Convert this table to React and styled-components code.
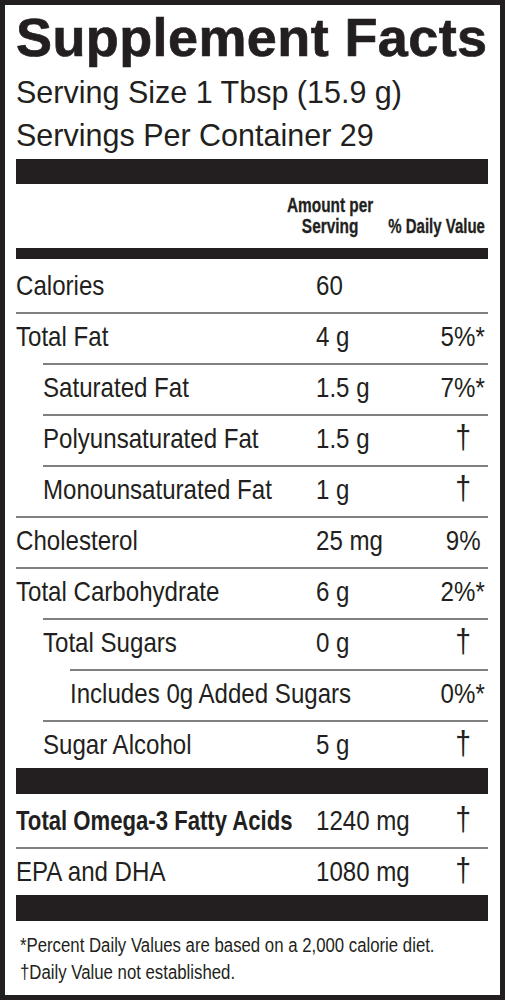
import React from 'react';
import styled, { createGlobalStyle } from 'styled-components';

const INK = '#231f20';

const rows = [
  { name: 'Calories', amount: '60', dv: '', level: 0, first: true },
  { name: 'Total Fat', amount: '4 g', dv: '5%*', level: 0 },
  { name: 'Saturated Fat', amount: '1.5 g', dv: '7%*', level: 1 },
  { name: 'Polyunsaturated Fat', amount: '1.5 g', dv: '†', level: 1 },
  { name: 'Monounsaturated Fat', amount: '1 g', dv: '†', level: 1 },
  { name: 'Cholesterol', amount: '25 mg', dv: '9%', level: 0 },
  { name: 'Total Carbohydrate', amount: '6 g', dv: '2%*', level: 0 },
  { name: 'Total Sugars', amount: '0 g', dv: '†', level: 1 },
  { name: 'Includes 0g Added Sugars', amount: '', dv: '0%*', level: 2 },
  { name: 'Sugar Alcohol', amount: '5 g', dv: '†', level: 1, last: true },
];

const omega = [
  { name: 'Total Omega-3 Fatty Acids', amount: '1240 mg', dv: '†', level: 0, first: true, bold: true },
  { name: 'EPA and DHA', amount: '1080 mg', dv: '†', level: 0, last: true },
];

// the label font is a condensed grotesque; no condensed face is installed,
// so the regular one is squeezed horizontally
const NARROW = 0.86;

export default function App() {
  const renderRows = (list) =>
    list.map((row, index) => (
      <Row key={index} $level={row.level} $first={row.first} $last={row.last}>
        <Name $bold={row.bold}>
          <Squeeze $x={row.bold ? 0.79 : NARROW}>{row.name}</Squeeze>
        </Name>
        <Amount>
          <Squeeze $x={NARROW}>{row.amount}</Squeeze>
        </Amount>
        <Daily $dagger={row.dv === '†'}>
          <Squeeze $x={NARROW} $origin="center">{row.dv}</Squeeze>
        </Daily>
      </Row>
    ));

  return (
    <>
      <GlobalStyle />
      <Label>
        <Title>Supplement Facts</Title>
        <Serving>Serving Size 1 Tbsp (15.9 g)</Serving>
        <Serving>Servings Per Container 29</Serving>
        <Bar $size={25} />
        <Header>
          <AmountHead>
            <Squeeze $x={0.77} $origin="center">
              Amount per
              <br />
              Serving
            </Squeeze>
          </AmountHead>
          <DailyHead>
            <Squeeze $x={0.75} $origin="right">% Daily Value</Squeeze>
          </DailyHead>
        </Header>
        <Bar $size={11} />
        {renderRows(rows)}
        <Bar $size={26} />
        {renderRows(omega)}
        <Bar $size={26} />
        <Notes>
          <Note>
            <Squeeze $x={NARROW}>*Percent Daily Values are based on a 2,000 calorie diet.</Squeeze>
          </Note>
          <Note>
            <Squeeze $x={NARROW}>†Daily Value not established.</Squeeze>
          </Note>
        </Notes>
      </Label>
    </>
  );
}

// Styles

const GlobalStyle = createGlobalStyle`
  body {
    margin: 0;
    background: #fff;
  }
`;

const Label = styled.div`
  box-sizing: border-box;
  width: 505px;
  height: 1000px;
  border: 5px solid ${INK};
  padding: 6px 12px 0 11px;
  color: ${INK};
  font-family: "Liberation Sans", Arial, sans-serif;
  display: flex;
  flex-direction: column;
  overflow: hidden;
`;

const Squeeze = styled.span`
  display: inline-block;
  white-space: nowrap;
  text-align: center;
  transform: scaleX(${(p) => p.$x});
  transform-origin: ${(p) => p.$origin || 'left'} center;
`;

const Title = styled.h1`
  margin: 0;
  font-size: 54px;
  font-weight: 700;
  line-height: 52px;
  letter-spacing: 0.4px;
  -webkit-text-stroke: 0.7px ${INK};
  white-space: nowrap;
`;

const Serving = styled.div`
  font-size: 30.5px;
  line-height: 43px;
  white-space: nowrap;
  &:first-of-type {
    margin-top: 8px;
  }
`;

const Bar = styled.div`
  height: ${(p) => p.$size}px;
  background: ${INK};
  flex-shrink: 0;
  margin-top: ${(p) => (p.$size === 25 ? 2 : 0)}px;
`;

const Header = styled.div`
  display: grid;
  grid-template-columns: minmax(0, 1fr) 100px 105px;
  align-items: end;
  padding: 11px 3px 11px 0;
  font-size: 20px;
  font-weight: 700;
  line-height: 21px;
  -webkit-text-stroke: 0.3px ${INK};
`;

const AmountHead = styled.div`
  grid-column: 2;
  display: flex;
  justify-content: center;
`;

const DailyHead = styled.div`
  display: flex;
  justify-content: flex-end;
`;

const Row = styled.div`
  display: grid;
  grid-template-columns: minmax(0, 1fr) 122px 50px;
  align-items: baseline;
  margin-left: ${(p) => [0, 27, 54][p.$level]}px;
  border-top: ${(p) => (p.$first ? 'none' : '2px solid #808080')};
  padding-top: ${(p) => (p.$first ? 4 : 0)}px;
  padding-bottom: ${(p) => (p.$last ? 0 : 3)}px;
  font-size: 28px;
  line-height: 46px;
`;

const Name = styled.div`
  font-weight: ${(p) => (p.$bold ? 700 : 400)};
  min-width: 0;
`;

const Amount = styled.div`
  min-width: 0;
`;

const Daily = styled.div`
  display: flex;
  justify-content: center;
  font-size: ${(p) => (p.$dagger ? 33 : 28)}px;
  line-height: ${(p) => (p.$dagger ? 38 : 46)}px;
`;

const Notes = styled.div`
  padding: 11px 0 0 4px;
  font-size: 19.5px;
  line-height: 27px;
`;

const Note = styled.div`
  white-space: nowrap;
`;
